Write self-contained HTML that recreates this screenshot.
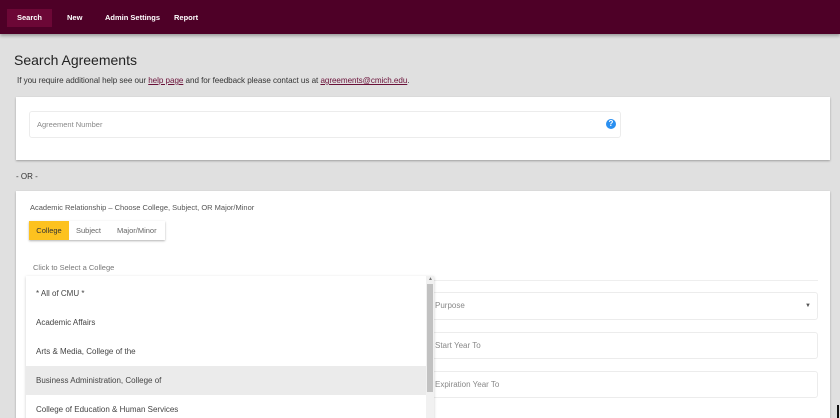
<!DOCTYPE html>
<html><head><style>
*{margin:0;padding:0;box-sizing:border-box}
html,body{width:840px;height:418px;overflow:hidden}
body{background:#e0e0e0;font-family:"Liberation Sans",sans-serif;position:relative}
.abs{position:absolute}
.nav{left:0;top:0;width:840px;height:34px;background:#4e0027;box-shadow:0 2px 3px rgba(0,0,0,.3)}
.nav span{position:absolute;top:9px;height:18px;line-height:18px;color:#fff;font-size:7.5px;font-weight:bold}
.card{background:#fff;box-shadow:0 1px 2px rgba(0,0,0,.3)}
.field{border:1px solid #ececec;border-radius:3px;background:#fff;font-size:8px;color:#888}
.item{position:absolute;left:0;width:400px;height:29px;line-height:29px;padding-left:10px;font-size:8px;color:#444}
a{color:#6a1038;text-decoration:underline}
</style></head><body>
<div class="abs nav">
<span style="left:7px;width:45px;background:#6c0736;text-align:center">Search</span>
<span style="left:67px">New</span>
<span style="left:105px">Admin Settings</span>
<span style="left:174px">Report</span>
</div>
<div class="abs" style="left:14px;top:52px;font-size:14px;color:#222">Search Agreements</div>
<div class="abs" style="left:17px;top:76px;font-size:8.1px;color:#333;letter-spacing:-0.05px">If you require additional help see our <a>help page</a> and for feedback please contact us at <a>agreements@cmich.edu</a>.</div>
<div class="abs card" style="left:16px;top:97px;width:814px;height:63px"></div>
<div class="abs field" style="left:29px;top:111px;width:592px;height:27px;line-height:25px;padding-left:7px;font-size:7.5px">Agreement Number</div>
<div class="abs" style="left:606px;top:119px;width:10px;height:10px;border-radius:50%;background:#2a8ff0;color:#fff;font-size:8px;font-weight:bold;line-height:10px;text-align:center">?</div>
<div class="abs" style="left:16px;top:172px;font-size:8px;color:#333">- OR -</div>
<div class="abs card" style="left:16px;top:191px;width:814px;height:230px"></div>
<div class="abs" style="left:30px;top:203px;font-size:7.5px;color:#555">Academic Relationship – Choose College, Subject, OR Major/Minor</div>
<div class="abs" style="left:29px;top:221px;width:136px;height:19px;box-shadow:0 1px 2px rgba(0,0,0,.3);font-size:7.5px;line-height:19px;color:#666">
<span class="abs" style="left:0;width:40px;height:19px;background:#fdc21f;color:#333;text-align:center">College</span>
<span class="abs" style="left:47px">Subject</span>
<span class="abs" style="left:88px">Major/Minor</span>
</div>
<div class="abs" style="left:33px;top:263px;font-size:7.5px;color:#777">Click to Select a College</div>
<div class="abs" style="left:432px;top:280px;width:386px;height:1px;background:#eee"></div>
<div class="abs field" style="left:432px;top:292px;width:386px;height:28px;line-height:26px;padding-left:2px">Purpose<span style="position:absolute;right:6px;top:0;font-size:6px;color:#555">▼</span></div>
<div class="abs field" style="left:432px;top:332px;width:386px;height:27px;line-height:25px;padding-left:2px">Start Year To</div>
<div class="abs field" style="left:432px;top:371px;width:386px;height:27px;line-height:25px;padding-left:2px">Expiration Year To</div>
<div class="abs" style="left:26px;top:276px;width:408px;height:150px;background:#fff;box-shadow:0 1px 3px rgba(0,0,0,.2)">
<div class="item" style="top:3px">* All of CMU *</div>
<div class="item" style="top:32px">Academic Affairs</div>
<div class="item" style="top:61px">Arts &amp; Media, College of the</div>
<div class="item" style="top:90px;background:#ebebeb">Business Administration, College of</div>
<div class="item" style="top:119px">College of Education &amp; Human Services</div>
<div class="abs" style="left:400px;top:0;width:8px;height:150px;background:#f1f1f1"></div>
<div class="abs" style="left:401px;top:8px;width:6px;height:108px;background:#c1c1c1"></div>
<div class="abs" style="left:402px;top:0;font-size:5px;color:#777">▲</div>
</div>
<div class="abs" style="left:837px;top:405px;width:2px;height:13px;background:#111"></div>
</body></html>
